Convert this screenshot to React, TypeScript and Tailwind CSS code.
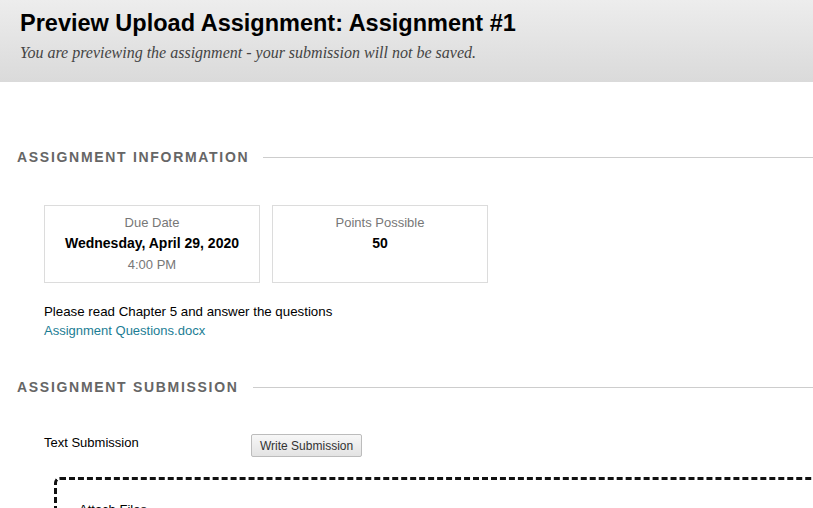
import React from "react";

const SectionTitle = ({ label }: { label: string }) => (
  <div className="flex items-center gap-[14px] pl-[17px]">
    <h2 className="text-[14px] font-bold uppercase tracking-[1.7px] text-[#666] whitespace-nowrap">{label}</h2>
    <div className="h-px flex-1 bg-[#cdcdcd]" />
  </div>
);

const InfoCard = ({ label, value, sub }: { label: string; value: string; sub?: string }) => (
  <div className="flex h-[78px] w-[216px] flex-col items-center border border-[#dcdcdc] pt-[6px] text-[13px] leading-[21px]">
    <p className="text-[#777]">{label}</p>
    <p className="text-[14px] font-bold text-black">{value}</p>
    {sub && <p className="text-[#777]">{sub}</p>}
  </div>
);

export default function App() {
  return (
    <div className="min-h-[508px] w-[813px] overflow-hidden bg-white font-['Liberation_Sans',Arial,sans-serif] text-[13px] text-black">
      <header className="h-[82px] bg-gradient-to-b from-[#ededed] to-[#dadada] px-[20px] pt-[8px]">
        <h1 className="text-[23.5px] font-bold leading-[30px]">Preview Upload Assignment: Assignment #1</h1>
        <p className="mt-[3px] font-['Liberation_Serif',Georgia,serif] text-[16px] italic text-[#444]">
          You are previewing the assignment - your submission will not be saved.
        </p>
      </header>

      <div className="pt-[65px]">
        <SectionTitle label="Assignment Information" />
        <div className="mt-[37px] flex gap-[12px] pl-[44px]">
          <InfoCard label="Due Date" value="Wednesday, April 29, 2020" sub="4:00 PM" />
          <InfoCard label="Points Possible" value="50" />
        </div>
        <div className="mt-[19px] pl-[44px] leading-[19px]">
          <p className="text-[13.3px]">Please read Chapter 5 and answer the questions</p>
          <a className="text-[#1b7d94]" href="#">Assignment Questions.docx</a>
        </div>

        <div className="mt-[37px]">
          <SectionTitle label="Assignment Submission" />
        </div>

        <div className="mt-[35px] flex items-start pl-[44px]">
          <span className="w-[207px] leading-[20px]">Text Submission</span>
          <button className="mt-[1px] h-[23px] rounded-[2px] border border-[#bcbcbc] bg-gradient-to-b from-[#f7f7f7] to-[#e3e3e3] px-[8px] text-[12px] text-[#333]">
            Write Submission
          </button>
        </div>

        <div className="ml-[54px] mt-[20px] w-[800px] rounded-tl-[6px] border-l-[3px] border-t-[3px] border-dashed border-[#111] pl-[22px] pt-[20px]">
          <p className="text-[13px]">Attach Files</p>
        </div>
      </div>
    </div>
  );
}
